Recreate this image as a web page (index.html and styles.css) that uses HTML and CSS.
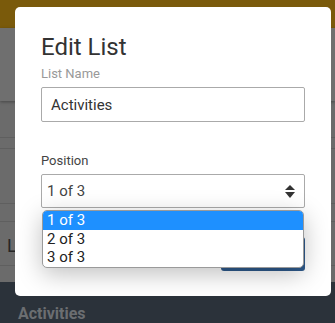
FILE: index.html
```html
<!DOCTYPE html>
<html lang="en">
<head>
<meta charset="UTF-8">
<meta name="viewport" content="width=device-width, initial-scale=1.0">
<title>Edit List</title>
<link rel="stylesheet" href="styles.css">
</head>
<body>

<div class="page">
  <div class="topbar"></div>
  <div class="subbar"></div>
  <div class="row row-a"></div>
  <div class="row row-b"></div>
  <div class="row row-c"></div>
  <div class="row row-d"></div>
  <div class="row row-e"><span class="row-title">Lists</span></div>
  <div class="row row-f"></div>
  <div class="footer">Activities</div>
</div>

<div class="modal">
  <h2 class="modal-title">Edit List</h2>

  <div class="field-label muted">List Name</div>
  <div class="text-input">Activities</div>

  <div class="field-label position-label">Position</div>
  <div class="select-wrap">
    <div class="select">
      <span>1 of 3</span>
      <span class="arrows">
        <span class="arrow-up"></span>
        <span class="arrow-down"></span>
      </span>
    </div>
    <ul class="options">
      <li class="option selected">1 of 3</li>
      <li class="option">2 of 3</li>
      <li class="option">3 of 3</li>
    </ul>
  </div>

  <div class="actions">
    <button class="save-btn">Save</button>
  </div>
</div>

</body>
</html>
```

FILE: styles.css
```css
body {
  margin: 0;
  padding: 0;
  font-family: Roboto, "Liberation Sans", Arial, sans-serif;
  background-color: #6b6b6b;
  width: 335px;
  height: 323px;
  overflow: hidden;
  position: relative;
}
.page {
  display: flex;
  flex-direction: column;
  height: 323px;
}
.topbar {
  height: 29px;
  background-color: #7a5a0b;
}
.subbar {
  height: 75px;
  background-color: #6f6f6f;
  box-shadow: 0 1px 3px rgba(0, 0, 0, 0.35);
  position: relative;
}
.row {
  border-bottom: 1px solid #5f5f5f;
  box-sizing: border-box;
}
.row-a { height: 38px; }
.row-b { height: 11px; }
.row-c { height: 56px; }
.row-d { height: 19px; }
.row-e {
  height: 45px;
  padding: 13px 0 0 7px;
}
.row-f { height: 16px; border-bottom: none; }
.row-title {
  font-size: 18px;
  color: #262626;
}
.footer {
  flex: 1;
  background-color: #2b323a;
  color: #6b6e71;
  font-weight: bold;
  font-size: 16px;
  padding: 22px 0 0 18px;
}

.modal {
  position: absolute;
  left: 15px;
  top: 7px;
  width: 316px;
  height: 289px;
  box-sizing: border-box;
  background-color: #fff;
  border-radius: 5px;
  padding: 26px 26px 0 26px;
}
.modal-title {
  margin: 0;
  font-size: 24px;
  line-height: 28px;
  font-weight: 400;
  color: #333;
}
.field-label {
  font-size: 13px;
  line-height: 15px;
  color: #444;
}
.muted {
  color: #999;
  margin-top: 5px;
}
.position-label {
  margin-top: 31px;
}
.text-input {
  margin-top: 6px;
  height: 35px;
  box-sizing: border-box;
  border: 1px solid #aaa;
  border-radius: 2px;
  padding-left: 9px;
  display: flex;
  align-items: center;
  font-size: 15px;
  color: #333;
}
.select-wrap {
  position: relative;
  margin-top: 6px;
}
.select {
  height: 34px;
  box-sizing: border-box;
  border: 1px solid #aaa;
  border-radius: 2px;
  padding: 0 9px 0 5px;
  display: flex;
  align-items: center;
  justify-content: space-between;
  font-size: 15px;
  color: #444;
}
.arrows {
  display: flex;
  flex-direction: column;
  gap: 2px;
}
.arrow-up {
  width: 0;
  height: 0;
  border-left: 5.5px solid transparent;
  border-right: 5.5px solid transparent;
  border-bottom: 5px solid #333;
}
.arrow-down {
  width: 0;
  height: 0;
  border-left: 5.5px solid transparent;
  border-right: 5.5px solid transparent;
  border-top: 6px solid #333;
}
.options {
  position: absolute;
  top: 36px;
  left: 1px;
  right: 1px;
  margin: 0;
  padding: 0;
  list-style: none;
  background-color: #fff;
  border: 1px solid #9a9a9a;
  border-radius: 5px;
  overflow: hidden;
  box-shadow: 0 6px 24px rgba(0, 0, 0, 0.25);
  z-index: 2;
}
.option {
  height: 18.5px;
  line-height: 18.5px;
  padding-left: 4px;
  font-size: 15px;
  color: #222;
}
.option.selected {
  background-color: #1e90ff;
  color: #fff;
}
.actions {
  display: flex;
  justify-content: flex-end;
  margin-top: 29px;
}
.save-btn {
  width: 84px;
  height: 34px;
  border: none;
  border-radius: 3px;
  background-color: #2e5a8c;
  color: #fff;
  font-family: inherit;
  font-size: 15px;
}
```
